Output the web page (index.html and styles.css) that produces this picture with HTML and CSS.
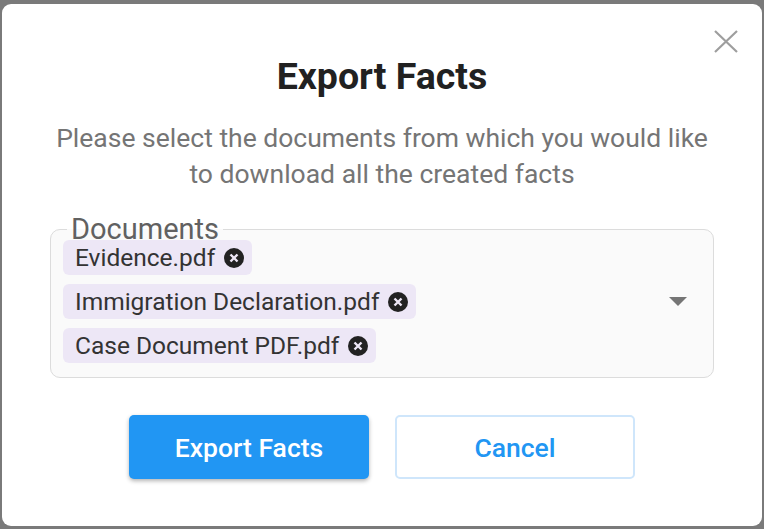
FILE: index.html
```html
<!DOCTYPE html>
<html lang="en">
<head>
  <meta charset="UTF-8">
  <title>Export Facts</title>
  <link rel="stylesheet" href="styles.css">
</head>
<body>

  <div class="modal">
    <!-- close button -->
    <button class="close" aria-label="Close">
      <svg width="24" height="23" viewBox="0 0 24 23">
        <path d="M1 1 L23 22 M23 1 L1 22" stroke="#9e9e9e" stroke-width="2.2" fill="none"/>
      </svg>
    </button>

    <h2 class="title">Export Facts</h2>
    <p class="subtitle">Please select the documents from which you would like to download all the created facts</p>

    <fieldset class="documents">
      <legend>Documents</legend>
      <div class="chips">
        <span class="chip">Evidence.pdf <svg class="chip-x" viewBox="0 0 20 20"><circle cx="10" cy="10" r="10" fill="#222"/><path d="M6.5 6.5 L13.5 13.5 M13.5 6.5 L6.5 13.5" stroke="#ede7f6" stroke-width="2.4"/></svg></span>
        <span class="chip">Immigration Declaration.pdf <svg class="chip-x" viewBox="0 0 20 20"><circle cx="10" cy="10" r="10" fill="#222"/><path d="M6.5 6.5 L13.5 13.5 M13.5 6.5 L6.5 13.5" stroke="#ede7f6" stroke-width="2.4"/></svg></span>
        <span class="chip">Case Document PDF.pdf <svg class="chip-x" viewBox="0 0 20 20"><circle cx="10" cy="10" r="10" fill="#222"/><path d="M6.5 6.5 L13.5 13.5 M13.5 6.5 L6.5 13.5" stroke="#ede7f6" stroke-width="2.4"/></svg></span>
      </div>
      <svg class="arrow" width="18" height="9" viewBox="0 0 18 9"><path d="M0 0 L18 0 L9 9 Z" fill="#757575"/></svg>
    </fieldset>

    <div class="actions">
      <button class="btn btn-primary">Export Facts</button>
      <button class="btn btn-outline">Cancel</button>
    </div>
  </div>

</body>
</html>
```

FILE: styles.css
```css
body {
  margin: 0;
  background-color: #7a7a7a;
  font-family: Roboto, "Liberation Sans", sans-serif;
  height: 529px;
  overflow: hidden;
}

.modal {
  position: relative;
  box-sizing: border-box;
  width: 760px;
  height: 522px;
  margin: 4px 0 0 2px;
  background: white;
  border-radius: 9px;
  display: flex;
  flex-direction: column;
  align-items: center;
  padding-top: 50px;
}

.close {
  position: absolute;
  top: 26px;
  right: 24px;
  background: none;
  border: none;
  padding: 0;
  width: 24px;
  height: 23px;
  cursor: pointer;
}

.title {
  margin: 0;
  font-size: 37.5px;
  font-weight: 700;
  color: #212121;
  line-height: 44px;
}

.subtitle {
  margin: 22px 0 0;
  width: 670px;
  text-align: center;
  font-size: 26.5px;
  line-height: 36px;
  color: #757575;
}

.documents {
  box-sizing: border-box;
  width: 664px;
  margin: 26px 0 0;
  padding: 0 12px 14px;
  border: 1px solid #dcdcdc;
  border-radius: 10px;
  background: #fafafa;
  display: flex;
  align-items: center;
  justify-content: space-between;
}

.documents legend {
  margin-left: 4px;
  padding: 0 4px;
  font-size: 29px;
  line-height: 22px;
  color: #616161;
}

.chips {
  display: flex;
  flex-direction: column;
  align-items: flex-start;
  gap: 9px;
}

.chip {
  display: flex;
  align-items: center;
  gap: 9px;
  height: 35px;
  padding: 0 8px 0 12px;
  background: #ede7f6;
  border-radius: 6px;
  font-size: 24.5px;
  line-height: 29px;
  color: #333;
}

.chip-x {
  width: 20px;
  height: 20px;
}

.arrow {
  margin-right: 14px;
}

.actions {
  display: flex;
  gap: 26px;
  margin-top: 37px;
}

.btn {
  box-sizing: border-box;
  width: 240px;
  height: 64px;
  border-radius: 5px;
  font-family: Roboto, "Liberation Sans", sans-serif;
  font-size: 26.5px;
  font-weight: 500;
  cursor: pointer;
}

.btn-primary {
  background-color: #2196f3;
  color: white;
  border: none;
  box-shadow: 0 2px 4px rgba(0, 0, 0, 0.3);
}

.btn-outline {
  background: white;
  color: #2196f3;
  border: 2px solid #cfe6fb;
}
```
